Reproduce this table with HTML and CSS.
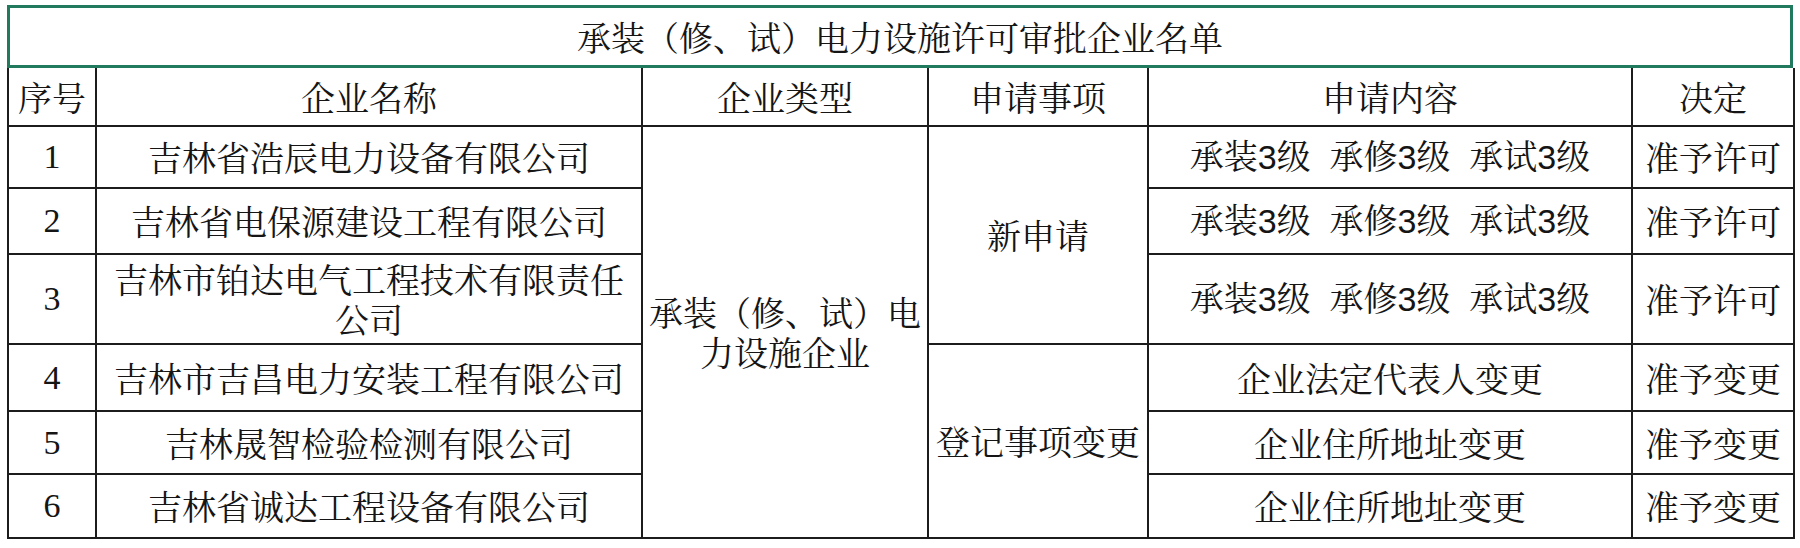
FILE: index.html
```html
<!DOCTYPE html>
<html lang="zh-CN">
<head>
<meta charset="utf-8">
<title>承装（修、试）电力设施许可审批企业名单</title>
<link rel="stylesheet" href="styles.css">
</head>
<body>
<div class="sheet">
  <div class="title">承装（修、试）电力设施许可审批企业名单</div>
  <table class="list">
    <colgroup>
      <col class="c-no"><col class="c-name"><col class="c-type"><col class="c-item"><col class="c-content"><col class="c-decision">
    </colgroup>
    <tr class="head r-h">
      <td>序号</td><td>企业名称</td><td>企业类型</td><td>申请事项</td><td>申请内容</td><td>决定</td>
    </tr>
    <tr class="r1">
      <td class="num">1</td><td class="name">吉林省浩辰电力设备有限公司</td>
      <td class="type" rowspan="6">承装（修、试）电力设施企业</td>
      <td class="item" rowspan="3">新申请</td>
      <td class="content">承装3级&nbsp;&nbsp;承修3级&nbsp;&nbsp;承试3级</td><td>准予许可</td>
    </tr>
    <tr class="r2">
      <td class="num">2</td><td class="name">吉林省电保源建设工程有限公司</td>
      <td class="content">承装3级&nbsp;&nbsp;承修3级&nbsp;&nbsp;承试3级</td><td>准予许可</td>
    </tr>
    <tr class="r3">
      <td class="num">3</td><td class="name">吉林市铂达电气工程技术有限责任公司</td>
      <td class="content">承装3级&nbsp;&nbsp;承修3级&nbsp;&nbsp;承试3级</td><td>准予许可</td>
    </tr>
    <tr class="r4">
      <td class="num">4</td><td class="name">吉林市吉昌电力安装工程有限公司</td>
      <td class="item" rowspan="3">登记事项变更</td>
      <td>企业法定代表人变更</td><td>准予变更</td>
    </tr>
    <tr class="r5">
      <td class="num">5</td><td class="name">吉林晟智检验检测有限公司</td>
      <td>企业住所地址变更</td><td>准予变更</td>
    </tr>
    <tr class="r6">
      <td class="num">6</td><td class="name">吉林省诚达工程设备有限公司</td>
      <td>企业住所地址变更</td><td>准予变更</td>
    </tr>
  </table>
</div>
</body>
</html>
```

FILE: styles.css
```css
html, body {
  margin: 0;
  padding: 0;
  background: #ffffff;
}

.sheet {
  padding: 5px 0 0 7px;
  width: 1786px;
  font-family: "Noto Serif CJK SC", "Noto Sans CJK SC", sans-serif;
  font-size: 34px;
  color: #151515;
}

.title {
  box-sizing: border-box;
  height: 63px;
  border: 3px solid #217a5d;
  display: flex;
  align-items: center;
  justify-content: center;
  line-height: 1;
}

.list {
  width: 1786px;
  table-layout: fixed;
  border-collapse: collapse;
  border-style: hidden solid solid solid;
  border-width: 2px;
  border-color: #1c1c1c;
}

.list td {
  border: 2px solid #1c1c1c;
  text-align: center;
  vertical-align: middle;
  padding: 0 4px;
  line-height: 40px;
}

.list tr.head td {
  border-top: none;
}

.c-no { width: 88px; }
.c-name { width: 546px; }
.c-type { width: 286px; }
.c-item { width: 220px; }
.c-content { width: 484px; }
.c-decision { width: 162px; }

.list td.name {
  padding: 0 10px;
}

.list td.num {
  font-family: "Liberation Serif", "Times New Roman", serif;
}

.list td.content {
  font-family: "Liberation Sans", "Noto Serif CJK SC", "Noto Sans CJK SC", sans-serif;
}

.r-h { height: 58px; }
.r1 { height: 62px; }
.r2 { height: 66px; }
.r3 { height: 90px; }
.r4 { height: 67px; }
.r5 { height: 63px; }
.r6 { height: 64px; }
```
